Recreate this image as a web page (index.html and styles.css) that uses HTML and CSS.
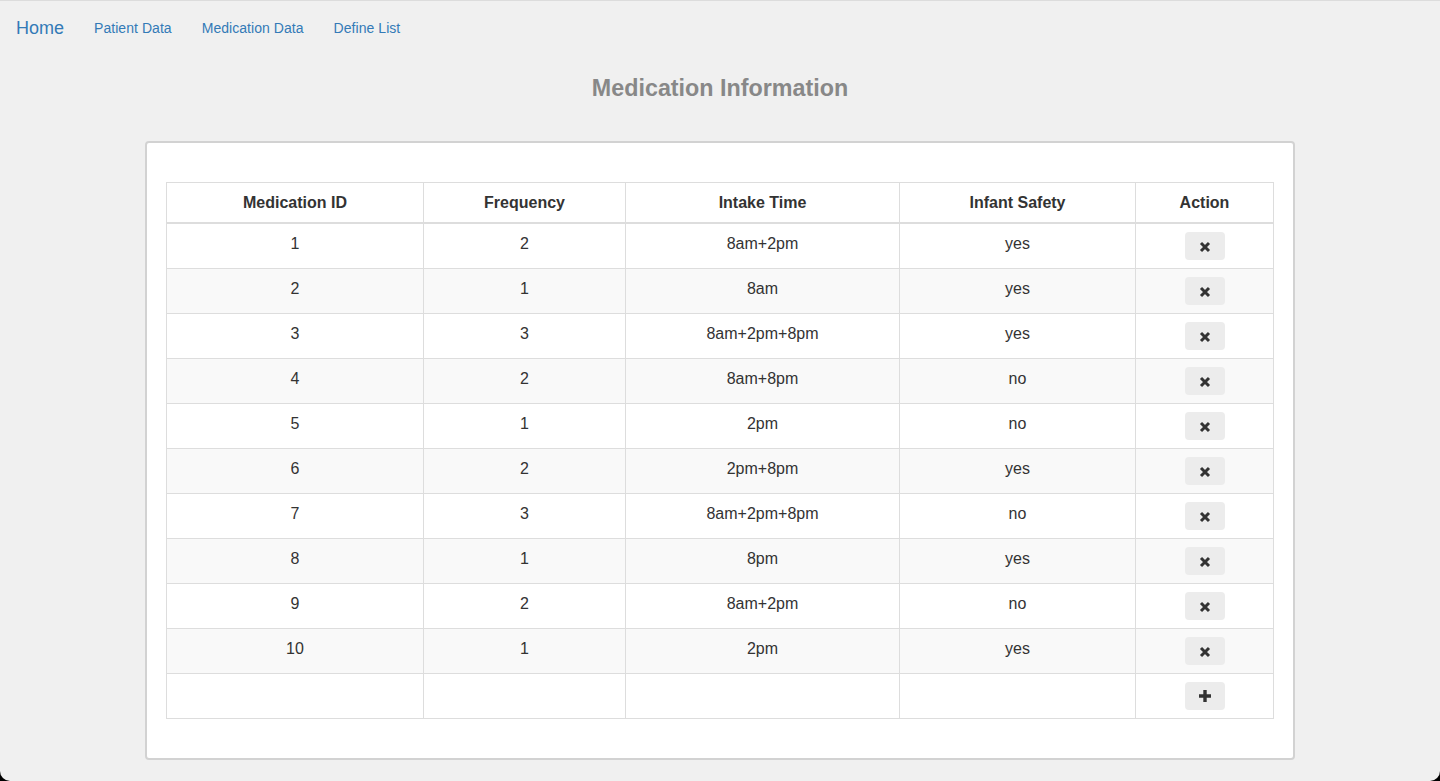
FILE: index.html
```html
<!DOCTYPE html>
<html>
<head>
<meta charset="utf-8">
<link rel="stylesheet" href="styles.css">
</head>
<body>
<div class="page">
  <nav class="nav">
    <a class="brand" href="#">Home</a>
    <a class="link" href="#">Patient Data</a>
    <a class="link" href="#">Medication Data</a>
    <a class="link" href="#">Define List</a>
  </nav>
  <h1 class="title">Medication Information</h1>
  <div class="panel">
    <table class="grid">
      <colgroup>
        <col class="c1"><col class="c2"><col class="c3"><col class="c4"><col class="c5">
      </colgroup>
      <thead>
        <tr>
          <th>Medication ID</th>
          <th>Frequency</th>
          <th>Intake Time</th>
          <th>Infant Safety</th>
          <th>Action</th>
        </tr>
      </thead>
      <tbody>
        <tr><td>1</td><td>2</td><td>8am+2pm</td><td>yes</td><td><button class="btn"><svg viewBox="0 0 12 12" class="ico"><path d="M2 2 L10 10 M10 2 L2 10" stroke="#333" stroke-width="3" stroke-linecap="butt"/></svg></button></td></tr>
        <tr><td>2</td><td>1</td><td>8am</td><td>yes</td><td><button class="btn"><svg viewBox="0 0 12 12" class="ico"><path d="M2 2 L10 10 M10 2 L2 10" stroke="#333" stroke-width="3" stroke-linecap="butt"/></svg></button></td></tr>
        <tr><td>3</td><td>3</td><td>8am+2pm+8pm</td><td>yes</td><td><button class="btn"><svg viewBox="0 0 12 12" class="ico"><path d="M2 2 L10 10 M10 2 L2 10" stroke="#333" stroke-width="3" stroke-linecap="butt"/></svg></button></td></tr>
        <tr><td>4</td><td>2</td><td>8am+8pm</td><td>no</td><td><button class="btn"><svg viewBox="0 0 12 12" class="ico"><path d="M2 2 L10 10 M10 2 L2 10" stroke="#333" stroke-width="3" stroke-linecap="butt"/></svg></button></td></tr>
        <tr><td>5</td><td>1</td><td>2pm</td><td>no</td><td><button class="btn"><svg viewBox="0 0 12 12" class="ico"><path d="M2 2 L10 10 M10 2 L2 10" stroke="#333" stroke-width="3" stroke-linecap="butt"/></svg></button></td></tr>
        <tr><td>6</td><td>2</td><td>2pm+8pm</td><td>yes</td><td><button class="btn"><svg viewBox="0 0 12 12" class="ico"><path d="M2 2 L10 10 M10 2 L2 10" stroke="#333" stroke-width="3" stroke-linecap="butt"/></svg></button></td></tr>
        <tr><td>7</td><td>3</td><td>8am+2pm+8pm</td><td>no</td><td><button class="btn"><svg viewBox="0 0 12 12" class="ico"><path d="M2 2 L10 10 M10 2 L2 10" stroke="#333" stroke-width="3" stroke-linecap="butt"/></svg></button></td></tr>
        <tr><td>8</td><td>1</td><td>8pm</td><td>yes</td><td><button class="btn"><svg viewBox="0 0 12 12" class="ico"><path d="M2 2 L10 10 M10 2 L2 10" stroke="#333" stroke-width="3" stroke-linecap="butt"/></svg></button></td></tr>
        <tr><td>9</td><td>2</td><td>8am+2pm</td><td>no</td><td><button class="btn"><svg viewBox="0 0 12 12" class="ico"><path d="M2 2 L10 10 M10 2 L2 10" stroke="#333" stroke-width="3" stroke-linecap="butt"/></svg></button></td></tr>
        <tr><td>10</td><td>1</td><td>2pm</td><td>yes</td><td><button class="btn"><svg viewBox="0 0 12 12" class="ico"><path d="M2 2 L10 10 M10 2 L2 10" stroke="#333" stroke-width="3" stroke-linecap="butt"/></svg></button></td></tr>
        <tr><td></td><td></td><td></td><td></td><td><button class="btn"><svg viewBox="0 0 14 14" class="ico plus"><path d="M7 1 V13 M1 7 H13" stroke="#333" stroke-width="3.4"/></svg></button></td></tr>
      </tbody>
    </table>
  </div>
</div>
</body>
</html>
```

FILE: styles.css
```css
html {
  margin: 0;
  background: #000;
  height: 100%;
}
body {
  margin: 0;
  min-height: 100%;
  background: #f0f0f0;
  border-top: 1px solid #dcdcdc;
  border-radius: 0 0 10px 10px;
  box-sizing: border-box;
  font-family: "Liberation Sans", Arial, sans-serif;
  color: #333;
}
.page {
  display: flex;
  flex-direction: column;
  align-items: center;
}
.nav {
  align-self: stretch;
  display: flex;
  align-items: center;
  padding: 17px 0 0 1px;
  height: 20px;
}
.nav a {
  color: #337ab7;
  text-decoration: none;
  line-height: 20px;
}
.brand {
  font-size: 18px;
  padding: 0 15px;
}
.link {
  font-size: 14px;
  padding: 0 15px;
  letter-spacing: 0.05px;
}
.title {
  margin: 36px 0 0;
  font-size: 23.3px;
  line-height: 28px;
  font-weight: bold;
  color: #888;
}
.panel {
  margin-top: 39px;
  width: 1150px;
  box-sizing: border-box;
  background: #fff;
  border: 2px solid #d2d2d2;
  border-radius: 4px;
  padding: 39px 20px 39px 19px;
}
.grid {
  width: 1107px;
  table-layout: fixed;
  border-collapse: collapse;
  border-spacing: 0;
  font-size: 16px;
  color: #333;
}
.grid th,
.grid td {
  border: 1px solid #ddd;
  text-align: center;
  vertical-align: top;
}
.grid th {
  font-weight: bold;
  line-height: 20px;
  border-bottom: 2px solid #ddd;
  padding: 10px 8px 9px;
}
.grid td {
  height: 28px;
  padding: 8px;
  line-height: 24px;
}
.grid tbody tr:nth-child(even) td {
  background: #f9f9f9;
}
.c1 { width: 257px; }
.c2 { width: 202px; }
.c3 { width: 274px; }
.c4 { width: 236px; }
.c5 { width: 138px; }
.btn {
  display: inline-flex;
  align-items: center;
  justify-content: center;
  width: 40px;
  height: 28px;
  margin: 0 0 0 1px;
  border: 0;
  border-radius: 4px;
  background: #ececec;
  padding: 0;
  vertical-align: top;
}
.ico {
  width: 12px;
  height: 12px;
  margin-top: 2px;
}
.ico.plus {
  width: 14px;
  height: 14px;
  margin-top: 0;
}
```
